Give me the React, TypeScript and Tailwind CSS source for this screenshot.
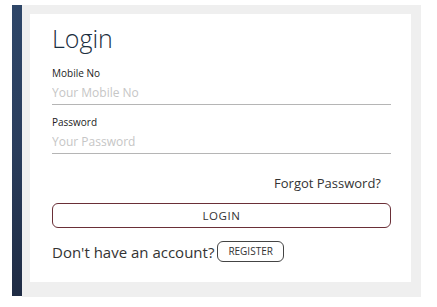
export default function App() {
  return (
    <div className="w-[437px] h-[307px] bg-white pt-[5px] pl-[12px] font-['Open_Sans',sans-serif]">
      <div className="flex h-[292px]">
        <div className="w-[10px] h-[291px] bg-gradient-to-b from-[#2e4668] via-[#2a3d5c] to-[#1f2c44]" />
        <div className="w-[399px] h-[292px] bg-[#efefef] pt-[9px] pl-[8px]">
          <div className="w-[381px] h-[268px] bg-white pt-[10px] pl-[22px] pr-[20px]">
            <h1 className="text-[25px] leading-[28px] font-light text-[#1a2e40]">Login</h1>

            <label className="block mt-[14px] text-[10px] leading-[14px] text-[#222]">Mobile No</label>
            <input
              className="block w-full h-[25px] border-b border-[#b5b5b5] text-[12px] text-[#333] placeholder:text-[#c6c6c6] outline-none"
              placeholder="Your Mobile No"
            />

            <label className="block mt-[10px] text-[10px] leading-[14px] text-[#222]">Password</label>
            <input
              type="password"
              className="block w-full h-[25px] border-b border-[#b5b5b5] text-[12px] text-[#333] placeholder:text-[#c6c6c6] outline-none"
              placeholder="Your Password"
            />

            <div className="mt-[21px] flex justify-end pr-[10px]">
              <a className="text-[13px] leading-[16px] text-[#333]">Forgot Password?</a>
            </div>

            <button className="mt-[12px] w-full h-[25px] rounded-[6px] border border-[#6a2f37] text-[11.5px] tracking-[0.6px] text-[#333]">
              LOGIN
            </button>

            <div className="mt-[13px] flex items-center">
              <span className="text-[15px] leading-[20px] text-[#333]">Don't have an account?</span>
              <button className="ml-[3px] h-[21px] px-[10px] rounded-[6px] border border-[#444] text-[10px] text-[#333]">
                REGISTER
              </button>
            </div>
          </div>
        </div>
      </div>
    </div>
  )
}
